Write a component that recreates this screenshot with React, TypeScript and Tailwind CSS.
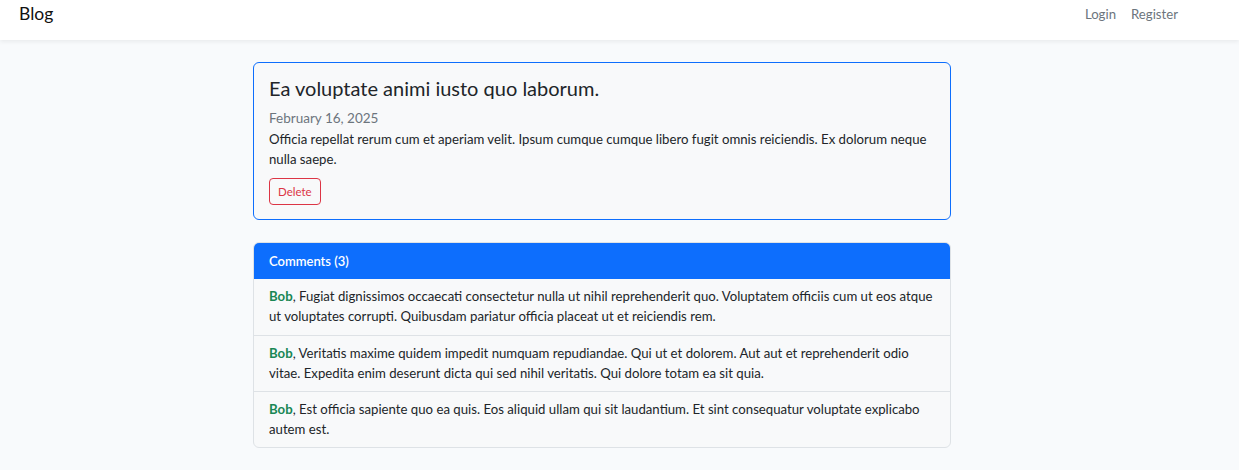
export default function App() {
  const comments = [
    "Fugiat dignissimos occaecati consectetur nulla ut nihil reprehenderit quo. Voluptatem officiis cum ut eos atque ut voluptates corrupti. Quibusdam pariatur officia placeat ut et reiciendis rem.",
    "Veritatis maxime quidem impedit numquam repudiandae. Qui ut et dolorem. Aut aut et reprehenderit odio vitae. Expedita enim deserunt dicta qui sed nihil veritatis. Qui dolore totam ea sit quia.",
    "Est officia sapiente quo ea quis. Eos aliquid ullam qui sit laudantium. Et sint consequatur voluptate explicabo autem est.",
  ];
  return (
    <div className="min-h-[470px] bg-[#f8fafc] text-[#212529] text-[13.2px] leading-[20px]" style={{ fontFamily: "Lato, 'Noto Sans', sans-serif" }}>
      <nav className="h-[40px] bg-white shadow-[0_2px_4px_rgba(0,0,0,0.06)] flex items-start justify-between pl-[19px] pr-[61px] pt-[4px]">
        <span className="text-[17.5px] leading-[20px] text-[#111]">Blog</span>
        <div className="flex gap-[15px] text-[13.2px] leading-[20px] text-[#6c757d]">
          <span>Login</span>
          <span>Register</span>
        </div>
      </nav>
      <main className="ml-[253px] w-[698px] pt-[22px]">
        <div className="border border-[#0d6efd] rounded-[6px] bg-[#f8f9fa] px-[15px] pt-[11px] pb-[14px]">
          <h1 className="text-[20px] leading-[28px] text-[#212529]">Ea voluptate animi iusto quo laborum.</h1>
          <p className="mt-[6px] text-[#6c757d] text-[13.5px] leading-[20px]">February 16, 2025</p>
          <p className="mt-[1px] text-[13.2px] leading-[20px]">Officia repellat rerum cum et aperiam velit. Ipsum cumque cumque libero fugit omnis reiciendis. Ex dolorum neque nulla saepe.</p>
          <button className="mt-[9px] h-[27px] px-[8px] border border-[#dc3545] rounded-[4px] text-[#dc3545] text-[11.5px] leading-none">Delete</button>
        </div>
        <div className="mt-[22px] border border-[#dee2e6] rounded-[6px] bg-[#f8f9fa] overflow-hidden">
          <div className="h-[36px] bg-[#0d6efd] text-white text-[13px] font-semibold flex items-center px-[15px]">Comments (3)</div>
          {comments.map((c, i) => (
            <p key={i} className={`px-[15px] pt-[7px] text-[13.2px] leading-[20px] ${i > 0 ? "border-t border-[#dee2e6] pb-[8px]" : "pb-[9px]"}`}>
              <b className="font-bold text-[#198754]">Bob</b>, {c}
            </p>
          ))}
        </div>
      </main>
    </div>
  );
}
